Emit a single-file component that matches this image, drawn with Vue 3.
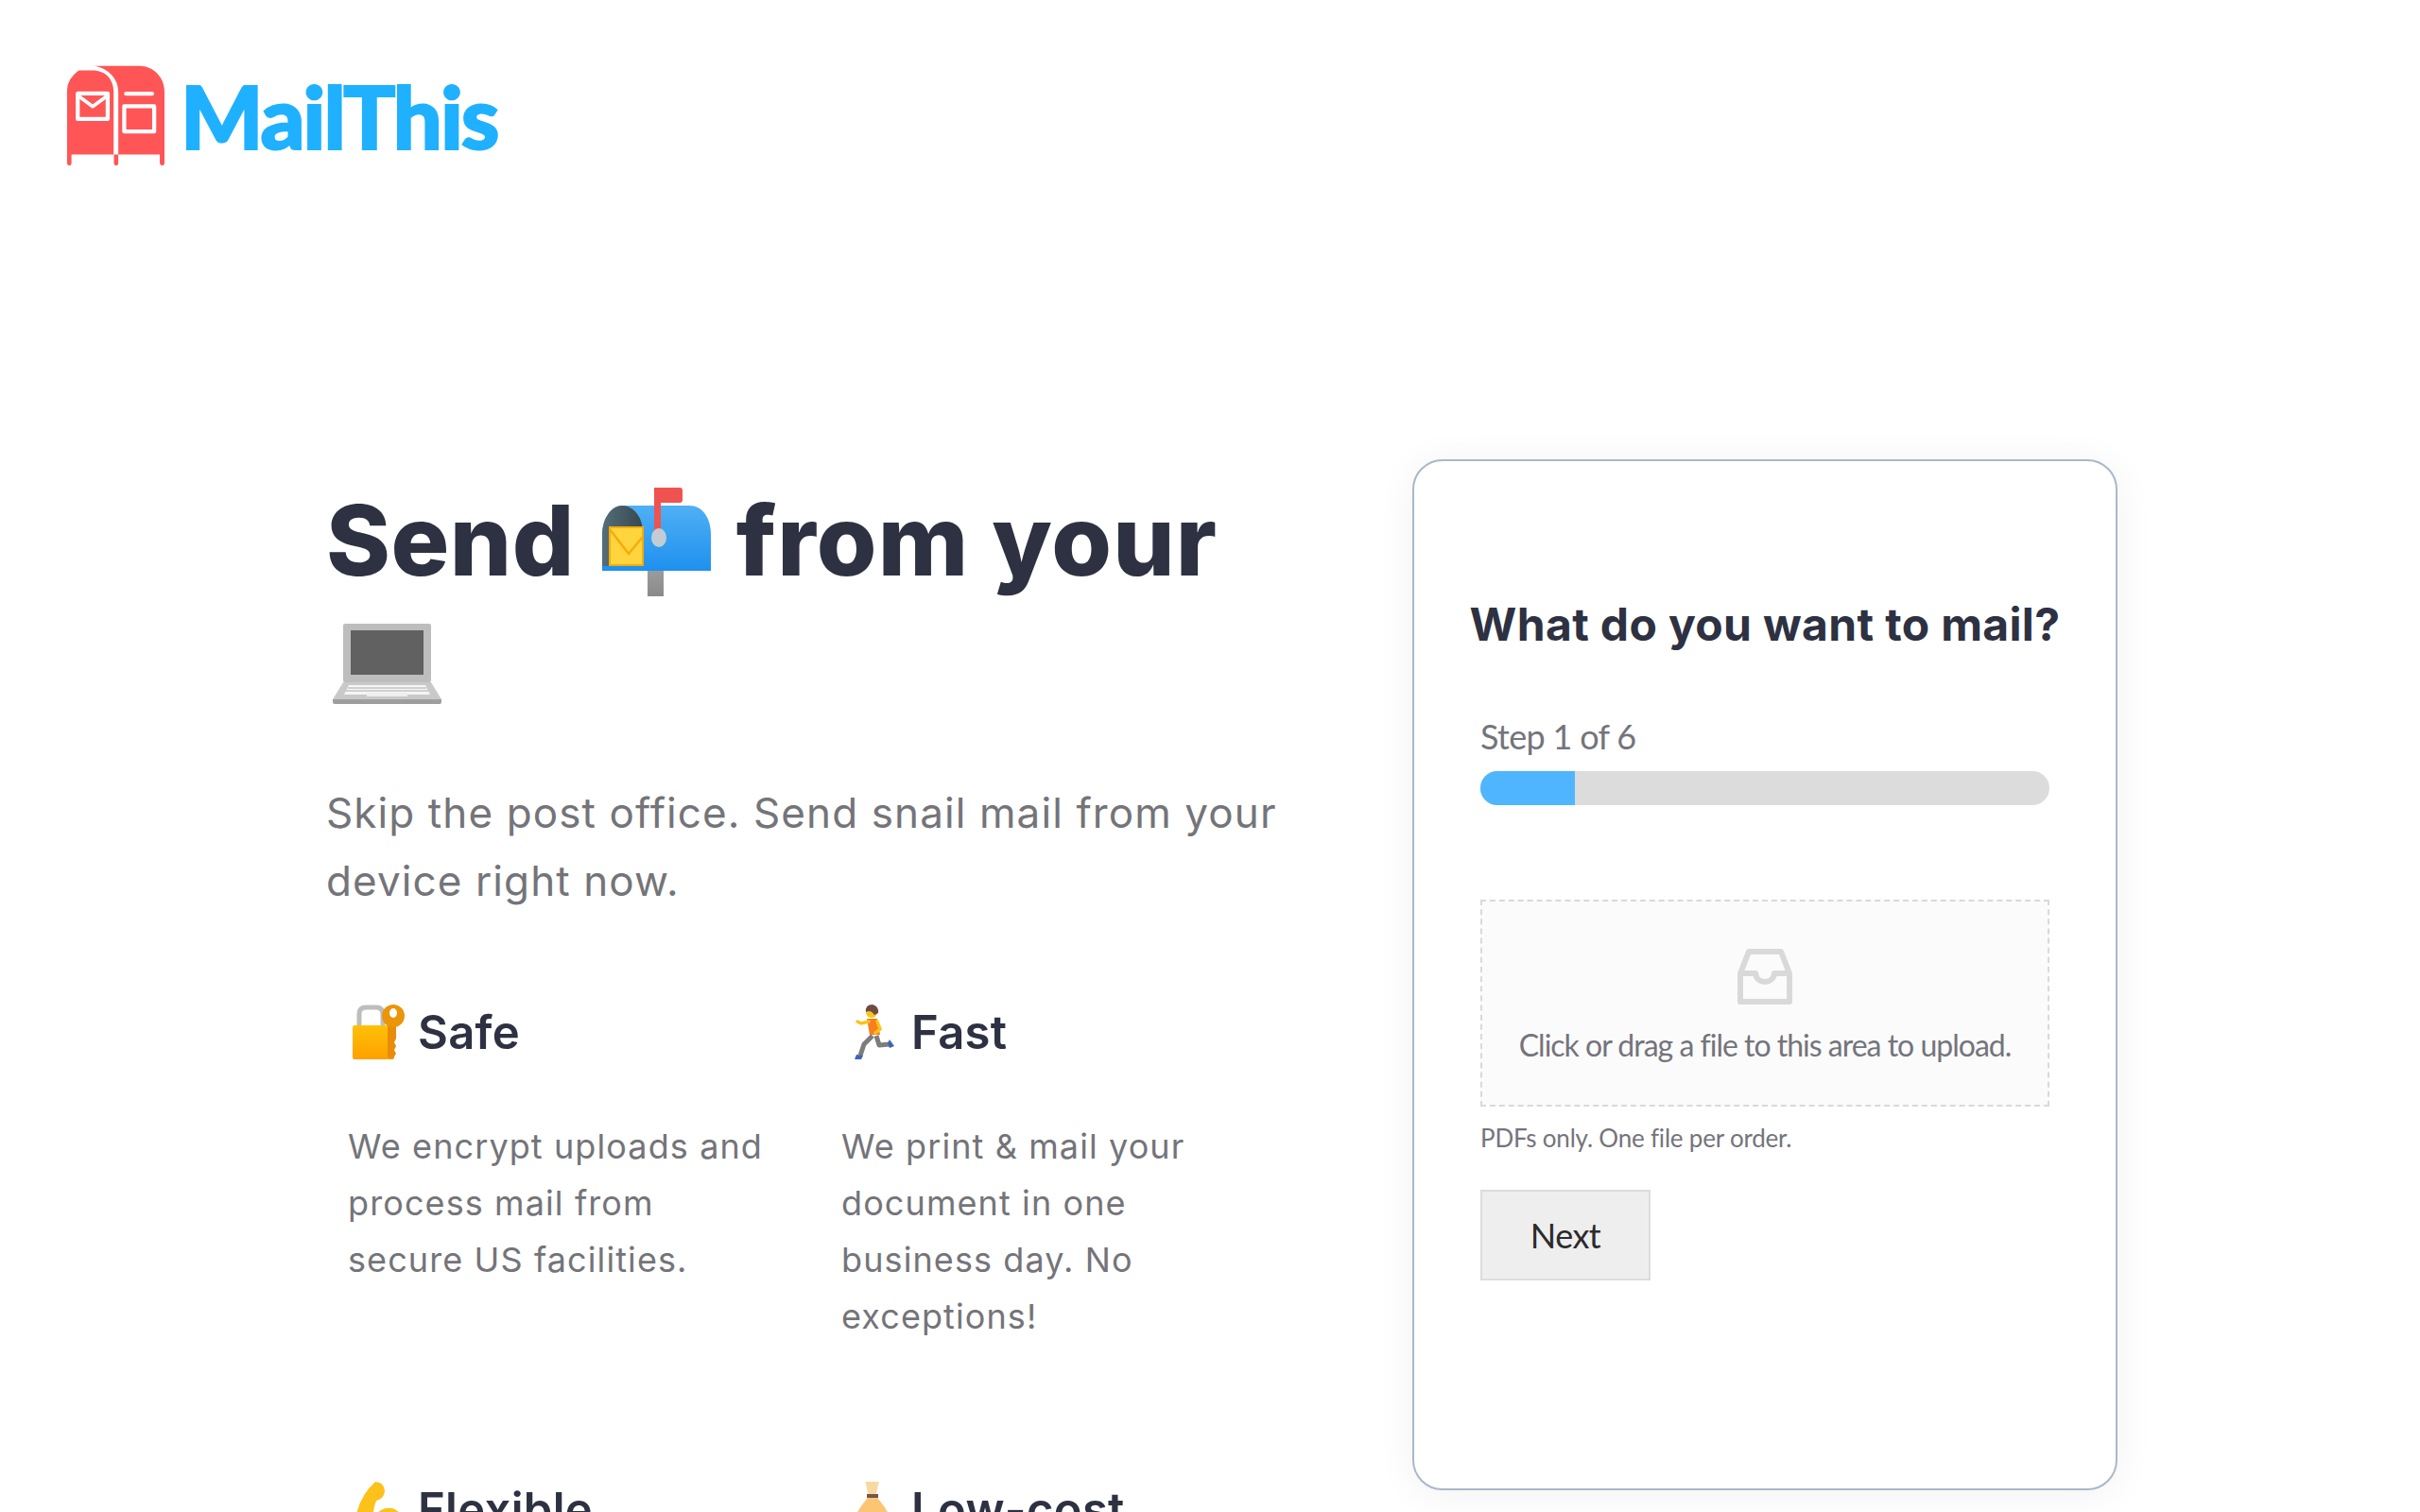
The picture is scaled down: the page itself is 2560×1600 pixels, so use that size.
<template>
  <div class="page">
    <header class="header">
      <svg class="logo-mark" viewBox="93 88 312 319" aria-hidden="true">
        <path fill="#ff5556" d="M180 88H325C370 88 405 125 405 170V400Q405 407 398 407T390 400V372H257V400Q257 407 250 407T243 400V372H107V400Q107 407 100 407T93 400V165Q93 130 130 102H175C215 102 242 130 242 170V372H257V170C257 130 225 95 180 88Z"/>
        <g fill="none" stroke="#fff" stroke-linejoin="round" stroke-linecap="round">
          <rect x="127" y="176" width="96" height="82" stroke-width="13"/>
          <path stroke-width="11" d="M132 186L175 218L218 186"/>
          <path stroke-width="13" d="M282 177H365"/>
          <rect x="276" y="217" width="96" height="81" stroke-width="13"/>
        </g>
      </svg>
      <span class="logo-text">MailThis</span>
    </header>
    <main class="main">
      <section class="intro">
        <h1 class="headline">
          Send
          <svg class="emoji-lg mailbox" viewBox="0 0 115 115" aria-hidden="true">
            <defs>
              <linearGradient id="mb" x1="0" y1="0" x2="0" y2="1"><stop offset="0" stop-color="#4fb0f5"/><stop offset="1" stop-color="#1e90ee"/></linearGradient>
              <linearGradient id="mp" x1="0" y1="0" x2="0" y2="1"><stop offset="0" stop-color="#9c9c9c"/><stop offset="1" stop-color="#8a8a8a"/></linearGradient>
              <linearGradient id="mh" x1="0" y1="0" x2="1" y2="0"><stop offset="0" stop-color="#546e7a"/><stop offset="1" stop-color="#37474f"/></linearGradient>
            </defs>
            <rect x="48" y="87" width="17" height="28" fill="url(#mp)"/>
            <path fill="url(#mb)" d="M24 19H92C106 19 115 32 115 50V88H0V50C0 32 10 19 24 19Z"/>
            <path fill="url(#mh)" d="M21 19C33 19 43 31 43 48V83H0V50C0 32 10 19 21 19Z"/>
            <path fill="#ffd43c" stroke="#f3ad0c" stroke-width="2" d="M8 42H43V82H8Z"/>
            <path fill="none" stroke="#f3ad0c" stroke-width="2.5" d="M8 44L28 70L43 52"/>
            <path fill="#ef5350" d="M55 0H82Q85 0 85 3V13Q85 16 82 16H62V50H55Z"/>
            <ellipse cx="60" cy="53" rx="8" ry="10" fill="#c3ccd3"/>
          </svg>
          <span class="from"> from your </span>
          <svg class="emoji-lg laptop" viewBox="0 0 115 85" aria-hidden="true">
            <rect x="11" y="0" width="93" height="62" rx="2" fill="#bdbdbd"/>
            <rect x="19" y="7" width="77" height="47" fill="#616161"/>
            <path fill="#c9c9c9" d="M11 62H104L115 80H0Z"/>
            <path fill="#f5f5f5" d="M17 65H98L103 75H12Z"/>
            <rect x="36" y="73" width="43" height="4" fill="#eee"/>
            <path fill="#9e9e9e" d="M0 80H115V83Q115 85 113 85H2Q0 85 0 83Z"/>
            <g stroke="#9a9a9a" stroke-width=".8"><path d="M16 68H99M14 71H101"/></g>
          </svg>
        </h1>
        <p class="lead">Skip the post office. Send snail mail from your device right now.</p>
        <div class="features">
          <article class="feature">
            <h2 class="feature-title">
              <svg class="emoji-sm" viewBox="0 0 56 58" aria-hidden="true">
                <defs><linearGradient id="lk" x1="0" y1="0" x2="0" y2="1"><stop offset="0" stop-color="#ffc107"/><stop offset="1" stop-color="#ffa000"/></linearGradient></defs>
                <path fill="none" stroke="#bdbdbd" stroke-width="5" d="M7 24V10Q7 3 14 3H25Q32 3 32 10V24"/>
                <rect x="0" y="22" width="44" height="36" rx="2" fill="url(#lk)"/>
                <path fill="#e98b0b" d="M37 18V56L42 58L46 52L44 48L46 44L44 40L46 36V18Z"/>
                <circle cx="43" cy="12" r="12" fill="#eb9508"/>
                <ellipse cx="43" cy="9" rx="4" ry="5" fill="#fff"/>
              </svg>
              Safe
            </h2>
            <p class="feature-text">We encrypt uploads and process mail from secure US facilities.</p>
          </article>
          <article class="feature">
            <h2 class="feature-title">
              <svg class="emoji-sm" viewBox="0 0 56 58" aria-hidden="true">
                <g transform="translate(4 0)">
                  <circle cx="23" cy="8" r="6" fill="#fcc21b"/>
                  <path fill="#6d4c41" d="M17 8Q16 0 24 0Q31 2 30 9L26 11Q22 5 17 8Z"/>
                  <path fill="#f97e1c" d="M18 15H29L32 32H21Z"/>
                  <path fill="none" stroke="#fcc21b" stroke-width="3.5" stroke-linecap="round" d="M20 18L12 20L8 18M29 18L32 26L27 30"/>
                  <path fill="none" stroke="#7d7d7d" stroke-width="5" stroke-linejoin="round" d="M24 33L15 42L11 54M28 33L31 43L42 42"/>
                  <path fill="#3f63b5" d="M7 53L14 54L12 58H5ZM42 37L47 44L42 46L40 41Z"/>
                </g>
              </svg>
              Fast
            </h2>
            <p class="feature-text">We print &amp; mail your document in one business day. No exceptions!</p>
          </article>
          <article class="feature">
            <h2 class="feature-title">
              <svg class="emoji-sm" viewBox="0 0 56 58" aria-hidden="true">
                <path fill="#fcc21b" d="M24 0Q33 0 34 10Q33 18 25 20Q21 30 22 38Q30 26 42 28Q56 34 54 48Q50 58 30 58H8Q0 56 2 44Q6 16 24 0Z"/>
              </svg>
              Flexible
            </h2>
          </article>
          <article class="feature">
            <h2 class="feature-title">
              <svg class="emoji-sm" viewBox="0 0 56 58" aria-hidden="true">
                <g transform="translate(6 0) scale(.8 1)">
                  <path fill="#f7d9a3" d="M18 0H36L32 14H22Z"/>
                  <rect x="20" y="13" width="15" height="4" fill="#795548"/>
                  <path fill="#fcc574" d="M21 17H34Q54 36 54 48Q50 58 27 58Q4 58 1 48Q1 36 21 17Z"/>
                </g>
              </svg>
              Low-cost
            </h2>
          </article>
        </div>
      </section>
      <aside class="card">
        <h2 class="card-title">What do you want to mail?</h2>
        <div class="step-label">Step 1 of 6</div>
        <div class="progress"><div class="progress-fill"></div></div>
        <div class="drop">
          <svg class="inbox" viewBox="0 0 58 59" aria-hidden="true">
            <path fill="none" stroke="#d9d9d9" stroke-width="6" stroke-linejoin="round" d="M3 26L12 3H46L55 26V56H3Z"/>
            <path fill="none" stroke="#d9d9d9" stroke-width="6" stroke-linejoin="round" d="M3 26H19C20 38 38 38 39 26H55"/>
          </svg>
          <div class="drop-text">Click or drag a file to this area to upload.</div>
        </div>
        <div class="hint">PDFs only. One file per order.</div>
        <button class="next" type="button">Next</button>
      </aside>
    </main>
  </div>
</template>

<script setup>
</script>

<style>
html, body { margin: 0; background: #fff; }
</style>

<style scoped>
.page {
  height: 1600px;
  overflow: hidden;
  background: #fff;
  font-family: Inter, "Liberation Sans", sans-serif;
  box-sizing: border-box;
}
.header {
  display: flex;
  align-items: flex-start;
  gap: 17px;
  padding: 69px 0 0 71px;
  height: 486px;
  box-sizing: border-box;
}
.logo-mark { width: 103px; height: 107px; flex: none; }
.logo-text {
  font-family: Lato, sans-serif;
  font-weight: 900;
  font-size: 92px;
  line-height: 107px;
  letter-spacing: -2px;
  color: #1fb1ff;
  -webkit-text-stroke: 2px #1fb1ff;
}
.main {
  display: flex;
  align-items: flex-start;
  padding-left: 345px;
}
.intro { width: 1056px; padding-top: 22px; flex: none; }
.headline {
  margin: 0;
  font-size: 103px;
  line-height: 128px;
  font-weight: 800;
  color: #2d3142;
  letter-spacing: .5px;
}
.from { letter-spacing: 1.2px; }
.mailbox { width: 115px; height: 115px; vertical-align: -22px; margin: 0 3px 0 6px; }
.laptop { width: 115px; height: 85px; margin-left: 7px; vertical-align: -8px; }
.lead {
  margin: 60px 0 0;
  width: 1040px;
  font-size: 44px;
  line-height: 72px;
  color: #747479;
  letter-spacing: 1.1px;
}
.features {
  display: grid;
  grid-template-columns: 522px 522px;
  margin-top: 94px;
}
.feature { padding: 0 23px; height: 505px; box-sizing: border-box; }
.feature-title {
  display: flex;
  align-items: center;
  gap: 13px;
  margin: 0;
  height: 60px;
  font-size: 49px;
  font-weight: 600;
  letter-spacing: .3px;
  color: #2d3142;
}
.emoji-sm { width: 56px; height: 58px; flex: none; margin-left: 5px; }
.feature-text {
  margin: 61px 0 0;
  max-width: 450px;
  font-size: 36px;
  line-height: 60px;
  color: #747479;
  letter-spacing: 1.1px;
}
.card {
  width: 746px;
  height: 1091px;
  margin-left: 93px;
  box-sizing: border-box;
  border: 2px solid #a9b8c8;
  border-radius: 32px;
  background: #fff;
  box-shadow: 0 4px 40px rgba(0,0,0,.06);
  padding: 0 70px;
  font-family: Lato, sans-serif;
  flex: none;
}
.card-title {
  margin: 137px -40px 0;
  text-align: center;
  font-family: Inter, sans-serif;
  font-size: 48px;
  line-height: 72px;
  font-weight: 700;
  color: #2d3142;
  letter-spacing: .35px;
  white-space: nowrap;
}
.step-label { margin-top: 54px; font-size: 36px; line-height: 56px; color: #74747c; letter-spacing: -.7px; }
.progress { height: 36px; margin-top: 9px; border-radius: 18px; background: #dcdcdc; overflow: hidden; }
.progress-fill { width: 100px; height: 100%; background: #4fb5ff; }
.drop {
  margin-top: 100px;
  height: 219px;
  box-sizing: border-box;
  border: 2px dashed #d9d9d9;
  background: #fbfbfb;
  display: flex;
  flex-direction: column;
  align-items: center;
  padding-top: 50px;
}
.inbox { width: 58px; height: 59px; flex: none; }
.drop-text { margin-top: 21px; font-size: 32px; line-height: 44px; color: #74747c; letter-spacing: -1px; white-space: nowrap; }
.hint { margin-top: 13px; font-size: 26px; line-height: 40px; color: #74747c; letter-spacing: -.2px; }
.next {
  display: block;
  margin-top: 35px;
  width: 180px;
  height: 96px;
  box-sizing: border-box;
  border: 2px solid #dcdcdc;
  background: #eee;
  color: #2b2b2b;
  font-family: Lato, sans-serif;
  font-size: 36px;
  letter-spacing: -.5px;
  padding: 0;
}
</style>
